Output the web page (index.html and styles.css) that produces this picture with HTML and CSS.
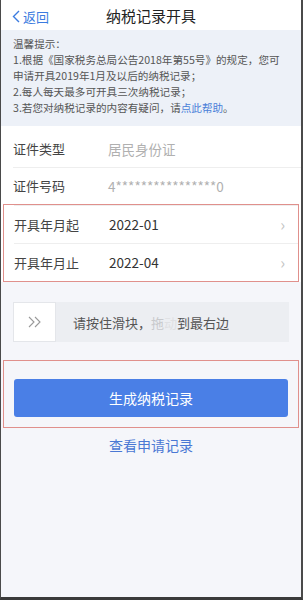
FILE: index.html
```html
<!DOCTYPE html>
<html lang="zh">
<head>
  <meta charset="UTF-8" />
  <meta name="viewport" content="width=device-width, initial-scale=1.0"/>
  <title>纳税记录开具</title>
  <link rel="stylesheet" href="styles.css">
</head>
<body>

<div class="phone">
  <header class="navbar">
    <a class="back" href="#">
      <svg width="8" height="13" viewBox="0 0 8 13"><path d="M7 1L1.5 6.5L7 12" fill="none" stroke="#3b7be0" stroke-width="1.4"/></svg>
      返回
    </a>
    <h1>纳税记录开具</h1>
  </header>

  <div class="tips">
    <p>温馨提示：</p>
    <p>1.根据《国家税务总局公告2018年第55号》的规定，您可<br>申请开具2019年1月及以后的纳税记录；</p>
    <p>2.每人每天最多可开具三次纳税记录；</p>
    <p>3.若您对纳税记录的内容有疑问，请<a href="#">点此帮助</a>。</p>
  </div>

  <div class="list">
    <div class="row">
      <span class="label">证件类型</span>
      <span class="value muted">居民身份证</span>
    </div>
    <div class="row">
      <span class="label">证件号码</span>
      <span class="value muted">4****************0</span>
    </div>
    <div class="mark">
      <div class="row">
        <span class="label">开具年月起</span>
        <span class="value">2022-01</span>
        <span class="arrow">›</span>
      </div>
      <div class="row">
        <span class="label">开具年月止</span>
        <span class="value">2022-04</span>
        <span class="arrow">›</span>
      </div>
    </div>
  </div>

  <div class="bottom">
    <div class="slider">
      <div class="knob">
        <svg width="16" height="12" viewBox="0 0 16 12"><path d="M2 1L7 6L2 11M8 1L13 6L8 11" fill="none" stroke="#999" stroke-width="1.1"/></svg>
      </div>
      <span class="slide-text">请按住滑块，<span class="fade">拖</span><span class="gone">动</span>到最右边</span>
    </div>

    <div class="mark btn-wrap">
      <button class="submit">生成纳税记录</button>
    </div>

    <a class="history" href="#">查看申请记录</a>
  </div>
</div>

</body>
</html>
```

FILE: styles.css
```css
* {
  box-sizing: border-box;
}

body {
  margin: 0;
  font-family: "Noto Sans CJK SC", "Noto Sans", sans-serif;
  background: #f5f6fa;
}

.phone {
  width: 303px;
  height: 600px;
  border-left: 1px solid #4a4a4a;
  border-right: 2px solid #4a4a4a;
  border-bottom: 3px solid #3a3a3a;
  background: #f5f6fa;
  display: flex;
  flex-direction: column;
}

.navbar {
  height: 30px;
  background: #fff;
  display: flex;
  align-items: center;
  justify-content: center;
  position: relative;
}

.navbar h1 {
  margin: 0;
  font-size: 15px;
  font-weight: 400;
  color: #222;
}

.back {
  position: absolute;
  left: 11px;
  top: 7px;
  display: flex;
  align-items: center;
  gap: 3px;
  color: #3b7be0;
  font-size: 13px;
  text-decoration: none;
}

.tips {
  background: #edf1f8;
  padding: 6px 10px 10px 12px;
  font-size: 10.6px;
  line-height: 16px;
  color: #555;
  white-space: nowrap;
}

.tips p {
  margin: 0;
}

.tips a {
  color: #4a7fd8;
  text-decoration: none;
}

.list {
  background: #fff;
  padding-top: 4px;
}

.row {
  height: 37px;
  display: flex;
  align-items: center;
  padding: 0 12px;
  position: relative;
  font-size: 13px;
}

.row + .row::before,
.mark .row:first-child::before {
  content: "";
  position: absolute;
  top: 0;
  left: 12px;
  right: 0;
  border-top: 1px solid #eeeeee;
}

.label {
  width: 95px;
  color: #444;
}

.value {
  flex: 1;
  color: #333;
  font-size: 13.5px;
}

.value.muted {
  color: #b0b0b0;
}

.arrow {
  color: #c4c4c4;
  font-size: 16px;
  margin-right: 1px;
}

.mark {
  margin: 0 2px 0 2px;
  border: 1px solid #e0908c;
}

.mark .row {
  height: 38px;
  padding-left: 10px;
}

.mark .row::before {
  left: 10px !important;
}

.bottom {
  flex: 1;
  background: #f5f6fa;
  padding-top: 20px;
}

.slider {
  margin: 0 12px 0 12px;
  height: 40px;
  background: #eceef2;
  display: flex;
  align-items: center;
}

.knob {
  width: 43px;
  height: 40px;
  background: #fff;
  border: 1px solid #e4e6ea;
  display: flex;
  align-items: center;
  justify-content: center;
}

.slide-text {
  margin-left: 17px;
  font-size: 13px;
  color: #555;
}

.fade {
  color: #c8c9cc;
}

.gone {
  color: #dfe0e3;
}

.btn-wrap {
  margin-top: 18px;
  padding: 18px 10px 10px;
}

.submit {
  width: 100%;
  height: 38px;
  border: none;
  border-radius: 3px;
  background: #4a7fe6;
  color: #fff;
  font-size: 14px;
  font-family: inherit;
}

.history {
  display: block;
  text-align: center;
  margin-top: 7px;
  color: #4a78d4;
  font-size: 14px;
  text-decoration: none;
}
```
